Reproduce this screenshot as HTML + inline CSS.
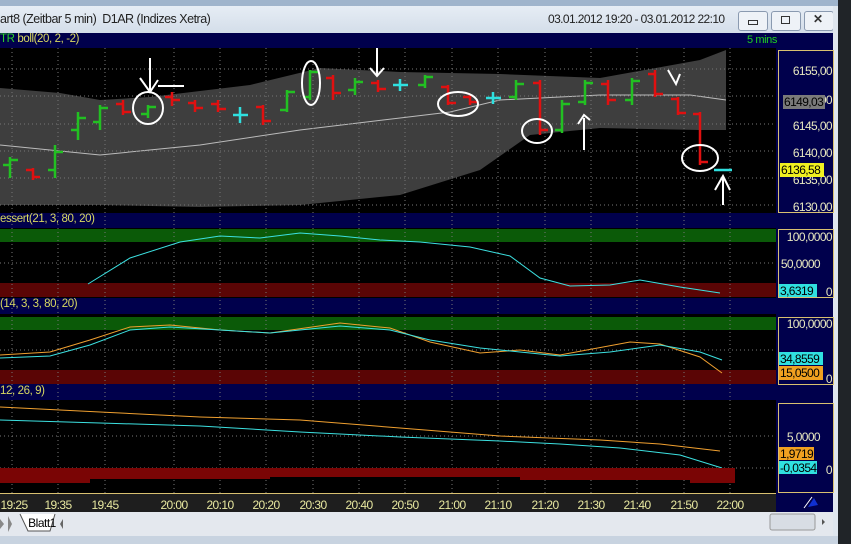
<!DOCTYPE html>
<html><head><meta charset="utf-8"><style>
body{margin:0;width:851px;height:544px;overflow:hidden;background:#1e1e1e;font-family:"Liberation Sans",sans-serif;position:relative}
.a{position:absolute}
.t{font-size:12px;white-space:nowrap}
</style></head><body>
<div class="a" style="left:0;top:0;width:851px;height:8px;background:#9fb4cc"></div>
<div class="a" style="left:0;top:6px;width:838px;height:28px;background:linear-gradient(#e6edf5,#d3dde9)"></div>
<div class="a" style="left:838px;top:0;width:13px;height:544px;background:#202428"></div>
<div class="a t" style="left:0;top:12px;color:#222;font-size:12.5px;letter-spacing:-0.5px">art8 (Zeitbar 5 min)&nbsp; D1AR (Indizes Xetra)</div>
<div class="a t" style="left:548px;top:12px;color:#222;letter-spacing:-0.6px">03.01.2012 19:20 - 03.01.2012 22:10</div>
<div class="a" style="left:738px;top:11px;width:28px;height:18px;border:1px solid #8a9ab0;border-radius:3px;background:#eef2f7"></div>
<div class="a" style="left:771px;top:11px;width:28px;height:18px;border:1px solid #8a9ab0;border-radius:3px;background:#eef2f7"></div>
<div class="a" style="left:804px;top:11px;width:28px;height:18px;border:1px solid #8a9ab0;border-radius:3px;background:#eef2f7"></div>
<div class="a" style="left:748px;top:20px;width:8px;height:3px;border:1px solid #333"></div>
<div class="a" style="left:781px;top:16px;width:7px;height:6px;border:1px solid #333"></div>
<div class="a t" style="left:813px;top:12px;color:#333;font-weight:bold">✕</div>
<div class="a" style="left:833px;top:6px;width:5px;height:530px;background:#dfe6ee"></div>

<div class="a" style="left:0;top:33px;width:833px;height:460px;background:#00004c"></div>
<div class="a t" style="left:0;top:33px;color:#d8d860;font-size:11.5px;letter-spacing:-0.4px"><span style="color:#2ad02a">TR</span> boll(20, 2, -2)</div>
<div class="a t" style="left:747px;top:34px;color:#20d020;font-size:11px;letter-spacing:-0.4px">5 mins</div>
<div class="a t" style="left:0;top:213px;color:#d8d860;font-size:11.5px;letter-spacing:-0.4px">essert(21, 3, 80, 20)</div>
<div class="a t" style="left:0;top:298px;color:#d8d860;font-size:11.5px;letter-spacing:-0.4px">(14, 3, 3, 80, 20)</div>
<div class="a t" style="left:0;top:385px;color:#d8d860;font-size:11.5px;letter-spacing:-0.4px">12, 26, 9)</div>

<svg class="a" style="left:0;top:0" width="851" height="544">
<g fill="#000"><rect x="0" y="48" width="776" height="165"/><rect x="0" y="228" width="776" height="70"/><rect x="0" y="314" width="776" height="70"/><rect x="0" y="400" width="776" height="93"/></g>
<rect x="0" y="229" width="776" height="13" fill="#0b5a08"/><rect x="0" y="283" width="776" height="14" fill="#5a0505"/>
<rect x="0" y="317" width="776" height="13" fill="#0b5a08"/><rect x="0" y="370" width="776" height="14" fill="#5a0505"/>
<polygon fill="#3e3e3e" points="0,88 60,93 100,100 150,97 250,85 320,68 400,72 500,74 600,78 700,60 726,50 726,130 700,130 600,128 530,135 480,170 400,195 300,205 200,207 100,205 0,205"/>
<polyline fill="none" stroke="#bbb" stroke-width="1" points="0,145 100,155 200,145 300,130 400,118 450,112 500,100 600,95 690,95 726,100"/>
<g stroke="#777" stroke-dasharray="1,3" stroke-width="1">
<path d="M12 48V493M58 48V493M105 48V493M174 48V493M220 48V493M266 48V493M313 48V493M359 48V493M405 48V493M452 48V493M498 48V493M545 48V493M591 48V493M637 48V493M684 48V493M730 48V493"/>
<path d="M0 69H776M0 96H776M0 124H776M0 151H776M0 178H776M0 205H776M0 263H776M0 350H776M0 436H776M0 468H776"/>
</g>
<g stroke-width="2.5" fill="none">
<path stroke="#22c022" d="M10 157V178M3 165H10M10 160H18"/>
<path stroke="#e01010" d="M33 168V180M26 170H33M33 177H40"/>
<path stroke="#22c022" d="M55 145V178M48 170H55M55 152H63"/>
<path stroke="#22c022" d="M78 112V140M71 130H78M78 118H86"/>
<path stroke="#22c022" d="M100 105V130M93 122H100M100 108H108"/>
<path stroke="#e01010" d="M123 100V115M116 104H123M123 112H131"/>
<path stroke="#22c022" d="M148 105V118M141 114H148M148 107H156"/>
<path stroke="#e01010" d="M172 92V106M165 97H172M172 100H180"/>
<path stroke="#e01010" d="M195 100V112M188 103H195M195 108H203"/>
<path stroke="#e01010" d="M218 100V112M211 104H218M218 109H226"/>
<path stroke="#2fe0e0" d="M240 107V123M233 115H248"/>
<path stroke="#e01010" d="M263 105V125M256 107H263M263 121H271"/>
<path stroke="#22c022" d="M287 90V112M280 110H287M287 92H295"/>
<path stroke="#22c022" d="M310 70V100M303 97H310M310 72H318"/>
<path stroke="#e01010" d="M333 75V100M326 78H333M333 93H341"/>
<path stroke="#22c022" d="M355 78V95M348 90H355M355 82H363"/>
<path stroke="#e01010" d="M378 80V92M371 83H378M378 89H386"/>
<path stroke="#2fe0e0" d="M400 79V91M393 85H408"/>
<path stroke="#22c022" d="M425 75V88M418 85H425M425 77H433"/>
<path stroke="#e01010" d="M448 85V105M441 87H448M448 103H456"/>
<path stroke="#e01010" d="M470 95V105M463 97H470M470 102H478"/>
<path stroke="#2fe0e0" d="M493 92V104M486 98H501"/>
<path stroke="#22c022" d="M516 80V100M509 97H516M516 84H524"/>
<path stroke="#e01010" d="M540 80V135M533 83H540M540 130H548"/>
<path stroke="#22c022" d="M562 100V133M555 130H562M562 104H570"/>
<path stroke="#22c022" d="M585 80V105M578 102H585M585 83H593"/>
<path stroke="#e01010" d="M608 80V105M601 84H608M608 100H616"/>
<path stroke="#22c022" d="M632 78V105M625 100H632M632 81H640"/>
<path stroke="#e01010" d="M655 70V97M648 74H655M655 94H663"/>
<path stroke="#e01010" d="M678 97V115M671 99H678M678 113H686"/>
<path stroke="#e01010" d="M700 112V165M693 114H700M700 162H708"/>
<path stroke="#2fe0e0" d="M714 170H732"/>
</g>
<g stroke="#fff" stroke-width="2" fill="none">
<ellipse cx="148" cy="108" rx="15" ry="16"/><path d="M150 58V90M140 78L150 92L158 80M158 86H184"/>
<ellipse cx="311" cy="83" rx="9" ry="22"/><path d="M377 48V75M370 68L377 76L384 68"/>
<ellipse cx="458" cy="104" rx="20" ry="12"/><ellipse cx="537" cy="131" rx="15" ry="12"/>
<path d="M584 150V118M578 124L584 115L590 120"/><path d="M668 70L676 84L680 74"/>
<ellipse cx="700" cy="158" rx="18" ry="13"/><path d="M723 205V178M715 190L723 176L730 190"/>
</g>
<polyline fill="none" stroke="#3ce0e0" points="88,284 130,258 180,242 220,236 260,238 300,233 340,236 380,240 420,242 470,247 510,256 540,278 570,286 610,285 640,280 680,287 720,293"/>
<polyline fill="none" stroke="#f0a030" points="0,355 50,352 90,340 130,327 170,325 220,330 270,333 340,323 390,328 430,342 480,353 520,350 560,355 630,342 660,344 700,357 722,373"/>
<polyline fill="none" stroke="#3ce0e0" points="0,358 50,356 90,345 130,330 170,327 220,330 270,333 340,326 390,330 430,340 480,348 520,352 560,356 610,352 660,345 700,352 722,360"/>
<polyline fill="none" stroke="#f0a030" points="0,407 100,412 200,417 300,420 400,428 500,436 600,440 660,444 720,451"/>
<polyline fill="none" stroke="#3ce0e0" points="0,420 100,423 200,426 300,432 400,437 500,441 560,444 620,448 680,455 722,468"/>
<g fill="#7a0505"><rect x="0" y="468" width="90" height="15"/><rect x="90" y="468" width="180" height="11"/><rect x="270" y="468" width="250" height="9"/><rect x="520" y="468" width="170" height="12"/><rect x="690" y="468" width="45" height="15"/></g>
<g fill="#00004c" stroke="#d8c070"><rect x="778.5" y="50.5" width="55" height="162"/><rect x="778.5" y="229.5" width="55" height="68"/><rect x="778.5" y="317.5" width="55" height="67"/><rect x="778.5" y="403.5" width="55" height="89"/></g>
<rect x="776" y="493" width="57" height="19" fill="#00004c"/>
<g font-family="Liberation Sans" font-size="12" fill="#e8e8c0" letter-spacing="-0.6" text-anchor="end">
<text x="832" y="75">6155,00</text><text x="832" y="104">6150,00</text><text x="832" y="130">6145,00</text><text x="832" y="157">6140,00</text><text x="832" y="184">6135,00</text><text x="832" y="211">6130,00</text>
<text x="832" y="241">100,0000</text><text x="820" y="268">50,0000</text><text x="832" y="296">0</text>
<text x="832" y="328">100,0000</text><text x="832" y="383">0</text><text x="820" y="441">5,0000</text><text x="832" y="474">0</text>
</g>
<g font-family="Liberation Sans" font-size="12" fill="#000" letter-spacing="-0.6">
<rect x="783" y="95" width="42" height="14" fill="#7a7a7a"/><text x="784" y="106">6149,03</text>
<rect x="780" y="163" width="44" height="14" fill="#f0f020"/><text x="781" y="174">6136,58</text>
<rect x="779" y="284" width="38" height="13" fill="#30e0e0"/><text x="780" y="295">3,6319</text>
<rect x="779" y="352" width="44" height="13" fill="#30e0e0"/><text x="780" y="363">34,8559</text>
<rect x="779" y="366" width="44" height="14" fill="#f0a020"/><text x="780" y="377">15,0500</text>
<rect x="779" y="447" width="35" height="13" fill="#f0a020"/><text x="780" y="458">1,9719</text>
<rect x="779" y="461" width="38" height="13" fill="#30e0e0"/><text x="780" y="472">-0,0354</text>
</g>
<line x1="0" y1="493.5" x2="776" y2="493.5" stroke="#d8c070"/>
<g font-family="Liberation Sans" font-size="12" fill="#e8e8a0" text-anchor="middle" letter-spacing="-0.6">
<text x="14" y="509">19:25</text><text x="58" y="509">19:35</text><text x="105" y="509">19:45</text><text x="174" y="509">20:00</text><text x="220" y="509">20:10</text><text x="266" y="509">20:20</text><text x="313" y="509">20:30</text><text x="359" y="509">20:40</text><text x="405" y="509">20:50</text><text x="452" y="509">21:00</text><text x="498" y="509">21:10</text><text x="545" y="509">21:20</text><text x="591" y="509">21:30</text><text x="637" y="509">21:40</text><text x="684" y="509">21:50</text><text x="730" y="509">22:00</text>
</g>
<path d="M808 507L814 498L818 505Z" fill="#1030d0"/><path d="M804 508L812 497" stroke="#fff"/>
<rect x="0" y="512" width="833" height="24" fill="#e4e8ee"/>
<path d="M0 519L4 524L0 529M8 516L12 524L8 532" fill="#888"/>
<path d="M20 514L28 531H50L55 514" fill="#fff" stroke="#555"/>
<text x="42" y="527" font-family="Liberation Sans" font-size="12" fill="#000" text-anchor="middle" letter-spacing="-0.5">Blatt1</text>
<path d="M63 519L60 524L63 529" fill="#666"/>
<rect x="770" y="514" width="45" height="16" rx="2" fill="#d8dde4" stroke="#999"/>
<path d="M822 519L825 522L822 525" fill="#555"/>
<rect x="0" y="536" width="838" height="8" fill="#c8d3e0"/>
</svg>
</body></html>
